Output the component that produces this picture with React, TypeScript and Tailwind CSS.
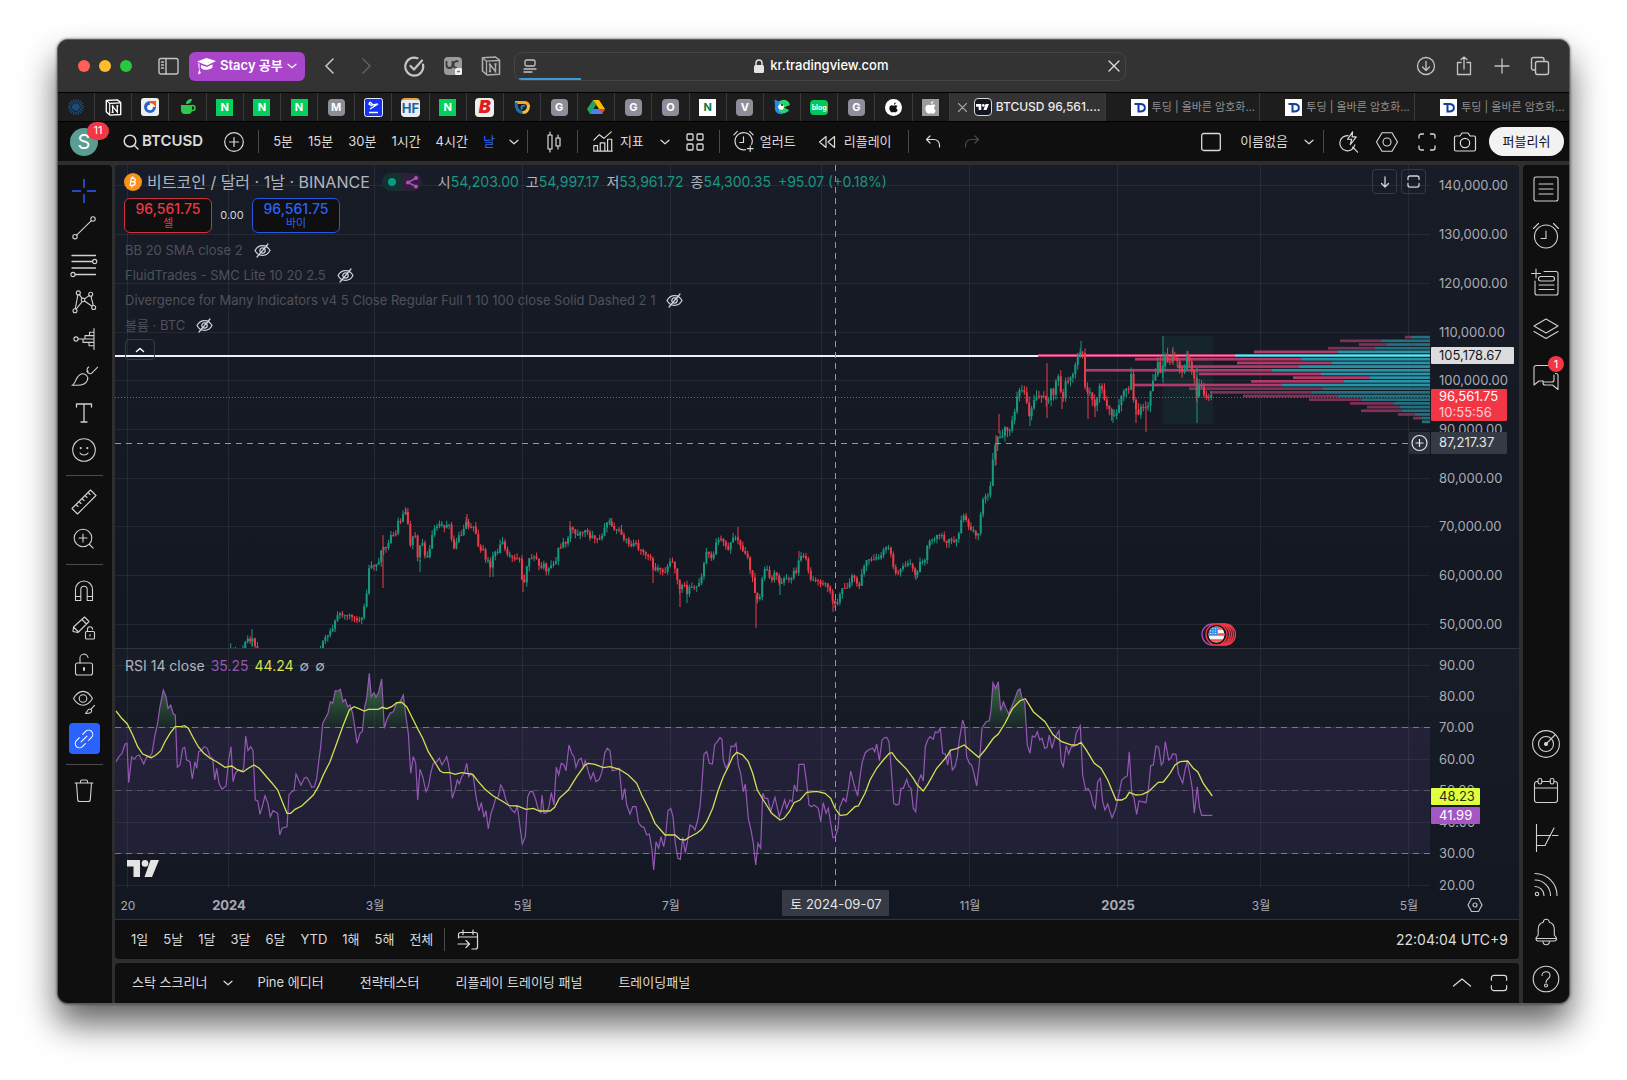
import type { ReactNode } from "react";
import clsx from "clsx";

/* ---------- chart data ---------- */

// Each segment holds x,y pairs as offsets from its own origin, divided by scale.
type Segment = { x: number; y: number; sx: number; pts: string };
type Point = [number, number];

const PLOT_RIGHT = 1315;
const DAY = 2.427;
const JAN_FIRST = 113.3;

const PRICE: Segment[] = [
  {
    x: -65, y: 395, sx: 3,
    pts: "520,310 535,280 543,262 550,270 560,285 575,275 586,245 594,235 601,245 608,235 616,262 624,300 700,320 790,300 812,265 820,240 828,228 835,225 843,208 850,205 857,175 864,163 871,160 879,168 886,165 893,168 900,164 907,172 915,175 922,182 930,178 938,170 944,130 951,95 957,25 963,10 968,30 975,10 982,15 989,0",
  },
  {
    x: 265, y: 315, sx: 3,
    pts: "0,245 8,170 14,235 18,205 25,190 32,165 40,165 48,160 55,120 62,125 70,100 78,95 85,140 92,205 100,160 108,170 115,260 122,172 128,190 136,235 145,230 152,190 160,145 168,145 176,130 185,135 195,145 205,125 212,150 218,210 226,200 234,165 242,170 250,150 260,120 268,150 276,135 285,145 292,190 300,215 308,200 315,240 322,235 330,268 338,230 346,215 355,220 362,185 370,185 378,220 386,225 394,230 404,238 412,235 418,230 424,290 430,315 436,300 442,245 450,230 458,235 466,225 474,250 482,270 490,245 498,275 506,265 514,255 520,250 526,262 532,200 540,210 548,185 556,190 562,195 568,140 576,145 584,155 590,175 598,155 606,160 614,150 622,155 630,175 638,165 646,178 654,175 662,175 670,160 676,130 684,125 692,125 698,148 706,148 714,148 722,150 728,185 736,170 744,190 752,200 760,190 768,188 776,210 784,210 792,218 800,228 808,230 816,240 822,282 830,262 838,265 846,275 854,280 862,260 870,245 878,245 886,270 892,300 898,330 906,315 914,315 920,345 928,320 936,322 944,322 952,318 960,305 966,285 972,250 978,215 986,220 994,235 1000,230 1006,190 1014,180 1022,175 1030,185 1038,200 1046,210 1054,180 1062,170 1070,175 1078,188 1086,210 1094,220 1102,225 1108,265 1116,285 1122,310 1128,370 1136,345 1144,360 1148,265 1156,268 1164,270 1170,300 1178,300 1186,265 1194,305 1202,315 1210,295 1218,295 1226,300 1234,295 1242,270 1250,280 1258,228 1266,228 1274,228 1282,245 1288,298 1296,300 1304,298 1312,302 1317,305",
  },
  {
    x: 705, y: 315, sx: 3,
    pts: "0,305 4,325 12,300 20,320 28,325 34,345 40,372 48,372 56,362 62,330 70,322 78,325 86,320 94,285 102,290 110,310 118,318 124,285 132,260 140,240 148,238 156,238 164,238 172,228 180,240 186,215 194,205 202,200 210,208 216,240 222,272 230,282 238,275 246,258 254,258 262,250 270,252 278,265 284,285 292,280 298,245 306,248 314,245 318,210 326,185 334,180 342,180 350,165 358,168 366,165 374,185 382,190 390,170 398,190 406,183 414,170 420,145 426,105 434,108 442,130 448,145 456,152 464,155 470,175 478,150 484,80 490,55 498,48 508,45",
  },
  {
    x: 805, y: 155, sx: 2.904,
    pts: "208,465 215,370 222,380 228,330 236,370 244,320 250,325 258,340 264,320 270,290 278,265 284,210 292,210 298,212 306,220 314,275 320,300 326,250 334,235 342,225 350,230 358,225 366,240 374,240 380,205 388,225 394,185 402,168 410,225 416,235 424,175 432,185 440,165 448,160 454,110 462,100 468,95 474,100 480,215 488,215 496,220 504,255 512,260 518,200 526,195 532,225 540,255 548,262 556,285 562,290 570,280 576,265 582,235 590,215 598,205 606,210 612,145 618,230 626,265 634,285 640,260 648,262 656,262 662,260 668,225 674,180 682,185 688,110 696,155 702,165 708,110 714,100 722,145 730,105 738,110 746,120 752,140 760,158 768,150 776,105 784,130 790,155 798,180 804,235 810,195 818,200 826,230 834,232 842,232 849,220",
  },
];

// Long wicks: x, top, bottom
const WICKS: [number, number, number][] = [
  [137, 464, 482], [268, 370, 423], [291, 344, 350], [305, 395, 407], [352, 349, 360],
  [375, 395, 412], [378, 390, 412], [408, 410, 427], [455, 356, 365], [495, 353, 360],
  [538, 400, 418], [565, 425, 442], [572, 425, 438], [623, 362, 372], [641, 430, 463],
  [665, 412, 430], [684, 386, 393], [718, 435, 447], [801, 405, 415], [884, 249, 268],
  [881, 270, 300], [915, 247, 261], [932, 198, 253], [947, 232, 244], [966, 176, 190],
  [973, 225, 254], [980, 238, 252], [998, 245, 258], [1021, 245, 258], [1031, 242, 267],
  [1048, 171, 218], [1058, 182, 200], [1073, 186, 200], [1082, 203, 258],
];

const RSI: Segment[] = [
  {
    x: -65, y: 395, sx: 3,
    pts: "198,605 207,590 216,580 225,553 231,550 236,668 245,590 253,598 260,588 268,585 275,600 281,612 290,590 298,592 306,580 314,530 322,495 330,440 340,390 348,410 354,445 362,435 370,462 376,465 382,622 390,615 398,565 404,562 410,600 420,605 427,657 435,605 440,625 446,575 455,570 463,560 472,565 480,590 488,595 494,660 500,625 507,670 516,688 528,678 536,600 543,560 549,665 556,640 565,630 574,635 581,625 587,528 594,572 602,560 609,572 616,720 623,722 630,763 638,735 645,707 654,730 661,770 669,752 683,760 689,825 696,805 711,800 717,705 725,695 732,692 738,642 746,660 753,675 763,655 770,652 778,665 785,682 793,680 800,655 806,605 812,560 818,490 826,475 834,460 841,425 848,430 856,392 864,393 871,388 879,425 886,418 893,440 900,435 908,460 914,500 921,550 930,520 937,515 944,440 950,415 958,340 964,410 972,398 978,412 986,395 995,357 1003,505 1010,480 1020,460 1030,455 1040,430 1050,425 1060,405 1068,470 1075,520 1082,640 1090,590 1097,610 1103,720 1110,628 1118,650 1128,695 1135,680 1142,640 1150,610 1160,605 1168,595 1176,615 1185,600 1190,590",
  },
  {
    x: 265, y: 315, sx: 3,
    pts: "205,850 210,880 217,955 225,930 232,900 238,912 245,890 253,880 260,850 266,890 273,880 280,890 288,950 297,993 304,968 312,1012 318,992 325,1047 333,1000 340,980 347,955 355,950 362,915 370,930 378,960 386,975 394,988 404,998 412,978 420,1040 427,1092 436,1070 443,950 450,935 458,935 466,955 474,985 482,998 486,945 492,1000 500,998 507,980 514,938 522,975 529,862 536,885 544,850 552,855 558,872 567,795 575,820 582,830 588,862 596,840 604,835 610,860 616,842 624,872 632,898 640,878 648,905 658,898 666,875 674,820 682,805 690,812 697,872 708,870 718,865 727,960 734,925 740,975 750,1002 758,980 768,980 776,1030 785,1040 792,1042 800,1065 808,1062 816,1110 821,1170 828,1085 836,1105 843,1070 851,1100 857,1065 864,992 872,985 879,1010 886,1090 894,1135 901,1138 908,1072 916,1118 923,1080 930,1035 938,1040 945,1050 953,1020 960,980 965,920 972,822 980,815 988,850 997,852 1004,795 1012,785 1020,773 1026,778 1030,840 1038,865 1046,850 1053,798 1062,800 1068,790 1075,855 1082,880 1090,935 1096,912 1105,1015 1113,1050 1120,1090 1127,1155 1134,1090 1142,1105 1148,940 1155,955 1163,955 1172,995 1185,952 1198,1010 1206,985 1214,960 1220,985 1230,960 1237,965 1243,915 1251,935 1257,853 1272,853 1280,910 1287,975 1294,980 1302,975 1315,985 1322,1025 1330,968 1338,1000 1345,985 1352,1030 1359,1073 1366,1070 1374,1045 1379,980",
  },
  {
    x: 705, y: 315, sx: 3,
    pts: "62,975 70,955 78,965 86,920 92,873 100,905 107,930 113,948 120,890 127,845 136,818 145,810 158,805 164,815 170,792 178,842 186,780 193,773 200,772 207,785 213,860 221,970 228,975 237,972 243,925 250,925 260,898 267,920 273,925 280,985 287,995 295,905 303,885 310,903 316,800 323,780 330,770 340,778 346,755 353,758 361,745 368,820 376,822 383,855 390,810 397,870 405,860 412,830 418,780 428,720 434,740 440,830 448,850 455,855 463,885 470,918 478,850 486,745 498,725 508,722 513,690 519,608 527,625 535,605 542,692 550,665 558,685 566,702 575,680 585,655 594,630 600,627 606,655 614,665 622,795 630,820 637,768 645,772 652,755 659,780 666,775 674,805 681,802 688,765 696,805 704,775 717,752 724,845 730,860 739,797 746,822 754,800 762,800 769,758 781,737 788,885 797,930 804,925 812,940 820,975 826,985 833,905 841,895 848,965 855,990 863,972 870,995 876,1013 886,990 894,955 905,900 915,892 922,888 928,815 935,940 942,955 950,1003 957,962 965,965 978,968 986,920 992,857 1000,855 1008,798 1016,802 1024,855 1030,845 1036,785 1046,840 1052,835 1058,822 1068,823 1075,880 1088,910 1095,870 1102,845 1110,885 1117,925 1123,1000 1132,920 1138,980 1145,1006 1177,1006",
  },
];

const RSI_MA: Segment[] = [
  {
    x: -65, y: 395, sx: 3,
    pts: "198,453 215,475 232,492 248,525 263,560 278,582 304,593 318,585 332,572 345,545 360,520 376,500 392,500 404,497 415,505 428,530 445,560 460,578 480,595 500,605 525,622 545,618 560,628 580,635 595,625 612,615 628,625 645,645 665,668 683,690 697,725 711,760 722,760 735,748 755,738 772,722 790,705 805,680 820,645 840,605 860,550 880,495 898,450 912,440 925,445 943,453 955,448 985,448 997,442 1010,446 1025,440 1040,428 1055,427 1070,440 1085,470 1105,510 1118,535 1135,575 1158,612 1170,632 1180,638",
  },
  {
    x: 265, y: 315, sx: 3,
    pts: "210,878 225,883 245,878 278,883 295,905 315,928 340,948 370,965 388,977 412,978 438,988 460,985 478,993 510,993 524,982 538,955 565,930 590,890 615,855 625,850 645,853 670,863 690,860 718,868 745,885 770,910 785,945 808,990 825,1030 855,1065 885,1065 900,1078 915,1080 930,1070 950,1060 965,1048 980,1025 998,985 1015,930 1030,890 1045,860 1058,830 1070,817 1088,825 1105,845 1118,880 1132,930 1150,960 1175,1000 1200,1020 1212,1015 1228,995 1242,968 1260,960 1280,937 1310,934 1335,940 1352,955 1365,985 1379,1004",
  },
  {
    x: 705, y: 315, sx: 3,
    pts: "62,1006 80,1004 105,980 115,978 135,940 150,900 170,865 190,840 208,820 216,818 230,838 260,868 280,895 292,915 310,933 325,910 350,865 380,830 392,810 410,806 433,795 450,810 476,832 495,810 520,775 535,762 555,730 578,685 600,662 616,656 640,695 675,725 700,765 725,785 755,795 770,795 783,787 800,812 823,850 843,865 863,900 888,960 905,960 918,953 928,937 948,945 965,944 985,935 1015,907 1030,906 1050,880 1065,855 1080,845 1103,843 1120,865 1133,875 1150,910 1177,948",
  },
];

// Volume profile rows: where the sell part starts and where the buy part starts
const PROFILE: [number, number][] = [
  [1290, 1296], [1225, 1266], [1244, 1272], [1213, 1260], [1139, 1223], [923, 1120],
  [1020, 1187], [1122, 1217], [1062, 1184], [970, 1157], [1084, 1206], [1178, 1255],
  [1136, 1229], [1018, 1167], [1074, 1208], [1095, 1197], [1128, 1223], [1194, 1247],
  [1235, 1279], [1252, 1285], [1246, 1287], [1283, 1300], [1298, 1307], [1307, 1307],
];

const PRICE_GRID: [number, string][] = [
  [20, "140,000.00"], [69, "130,000.00"], [118, "120,000.00"], [167, "110,000.00"],
  [215, "100,000.00"], [264, "90,000.00"], [313, "80,000.00"], [361, "70,000.00"],
  [410, "60,000.00"], [459, "50,000.00"],
];
const RSI_GRID: [number, string][] = [
  [500, "90.00"], [531, "80.00"], [562, "70.00"], [594, "60.00"], [625, "50.00"],
  [657, "40.00"], [688, "30.00"], [720, "20.00"],
];
const TIME_GRID: [number, string, boolean?][] = [
  [12, "20"], [113, "2024", true], [259, "3월"], [407, "5월"], [555, "7월"], [706, ""],
  [854, "11월"], [1002, "2025", true], [1145, "3월"], [1293, "5월"],
];

const decode = (segments: Segment[]): Point[] =>
  segments.flatMap((s) =>
    s.pts.split(" ").map((p): Point => {
      const [x, y] = p.split(",").map(Number);
      return [s.x + x / s.sx, s.y + y / 3];
    }),
  );

const toPath = (points: Point[]) =>
  "M" + points.map(([x, y]) => `${x.toFixed(1)} ${y.toFixed(1)}`).join("L");

function valueAt(points: Point[], x: number) {
  const i = points.findIndex((p) => p[0] >= x);
  if (i <= 0) return points[i === 0 ? 0 : points.length - 1][1];
  const [x0, y0] = points[i - 1];
  const [x1, y1] = points[i];
  return y0 + ((y1 - y0) * (x - x0)) / (x1 - x0 || 1);
}

function buildCandles() {
  const points = decode(PRICE);
  const candles = [];
  for (let i = -2; i < 412; i++) {
    const x = JAN_FIRST + i * DAY;
    if (x > 1098) break;
    const open = valueAt(points, x - DAY);
    const close = valueAt(points, x);
    const wobble = Math.abs(Math.sin(i * 12.9898) * 43758.5453) % 1;
    const reach = x > 870 ? 7 : 5;
    const body = Math.max(Math.abs(open - close), 1);
    const flip = body < 1.6 && wobble > 0.5;
    candles.push({
      x,
      up: flip ? close > open : close <= open,
      top: Math.min(open, close),
      body,
      high: Math.min(open, close) - wobble * reach,
      low: Math.max(open, close) + (1 - wobble) * reach,
    });
  }
  return candles;
}

const CANDLES = buildCandles();
const RSI_PATH = toPath(decode(RSI));
const MA_PATH = toPath(decode(RSI_MA));

/* ---------- icons ---------- */

function Icon({ size = 28, box = 28, w = 1.1, className, children }: {
  size?: number; box?: number; w?: number; className?: string; children: ReactNode;
}) {
  return (
    <svg
      width={size} height={size} viewBox={`0 0 ${box} ${box}`} fill="none" stroke="currentColor"
      strokeWidth={w} strokeLinecap="round" strokeLinejoin="round" aria-hidden="true"
      className={clsx("shrink-0", className)}
    >
      {children}
    </svg>
  );
}

const Chevron = () => (
  <Icon size={10} box={10} w={1.2}><path d="M1 3.2l4 3.6 4-3.6" /></Icon>
);

const HexNut = ({ size }: { size: number }) => (
  <Icon size={size} box={24}>
    <path d="M7 2.7h10L22.5 12 17 21.3H7L1.5 12z" /><circle cx="12" cy="12" r="4" />
  </Icon>
);

const Corners = ({ size, w = 1.3 }: { size: number; w?: number }) => (
  <Icon size={size} box={20} w={w}>
    <path d="M1.5 7V4.500a3 3 0 0 1 3-3h11a3 3 0 0 1 3 3V7M18.500 13v2.500a3 3 0 0 1-3 3h-11a3 3 0 0 1-3-3V13" />
  </Icon>
);

const TvMark = ({ width }: { width: number }) => (
  <svg width={width} viewBox="0 0 32 17" fill="currentColor" aria-hidden="true">
    <path d="M0 0h13v17H6.5V6.5H0z" /><circle cx="18" cy="3.4" r="3.3" /><path d="M23.5 0H32l-7 17h-7.5z" />
  </svg>
);

const NotionMark = ({ size, className }: { size: number; className?: string }) => (
  <svg width={size} height={size} viewBox="0 0 20 20" className={className} aria-hidden="true">
    <path d="M1.5 1.8L14.5 1l4 3.2v14L6 19l-4.500-4z" fill="none" stroke="currentColor" strokeWidth="1.6" strokeLinejoin="round" />
    <path d="M5.5 5.2L18 4.5M5.5 5.2V18.5M1.8 2l3.7 3.2" fill="none" stroke="currentColor" strokeWidth="1.3" />
    <path d="M9 15.5V8.500l5.500 7V8M7.800 8.400H10M7.800 15.600h2.400M13.300 8h2.400" fill="none" stroke="currentColor" strokeWidth="1.500" />
  </svg>
);

const TooDingMark = () => (
  <svg width="17" height="17" viewBox="0 0 17 17" fill="none" stroke="#0e3f9e" strokeWidth="2" className="mr-1 shrink-0 bg-white" aria-hidden="true">
    <path d="M3.500 5h5.500c6.500 0 6.500 7.500 0 7.500H7.500V5" />
  </svg>
);

const DRAW_TOOLS: { name: string; icon: ReactNode; active?: boolean; linked?: boolean }[][] = [
  [
    { name: "십자선", active: true, icon: <path d="M14 2.5v8M14 17.5v8M2.5 14h8M17.5 14h8" strokeWidth="1.4" /> },
    { name: "추세선", icon: <><circle cx="5" cy="22.7" r="2.2" /><circle cx="23" cy="5" r="2.2" /><path d="M6.6 21.1L21.4 6.6" /></> },
    { name: "피보나치", icon: <><path d="M2 4.5h23.5M2 10.5h20.5M2 17h23.5M5.2 23.5h20.3" strokeWidth="1.3" /><circle cx="24.7" cy="10.5" r="2.1" /><circle cx="3" cy="23.5" r="2.1" /></> },
    { name: "패턴", icon: <><circle cx="8.3" cy="4.9" r="2" /><circle cx="20.7" cy="6.3" r="2" /><circle cx="5" cy="22.7" r="2" /><circle cx="23.7" cy="19.5" r="2" /><circle cx="13" cy="11.9" r="1.8" /><path d="M7.9 6.9L5.3 20.7M9.4 6.6l2.6 3.8M14.6 10.9l4.500-3.300M21 8.300l2.300 9.200M14.500 13l7.600 5.300M12.200 13.600L6.200 21" /></> },
    { name: "예측", icon: <><circle cx="6" cy="14" r="2.1" /><path d="M24 3.5v21M8.2 14h15.8M24 7.2h-4.5v3.4M24 10.6h-9v3.4M24 17.4H13V14M24 20.8h-5v-3.4" /></> },
    { name: "브러시", icon: <><path d="M2 23.3c4-1 3.5-10.3 10-11.5 4-.5 6.5 3 5.500 6-1.300 3.800-6 5.500-10.500 5.500z" /><path d="M18 9.500c-1.500-1.500-1-3.500.7-4.500M17 9.300c1 2.500 3.500 3 5 1.600l5.700-5.800" /></> },
    { name: "텍스트", icon: <path d="M6.5 8V5h15v3M14 5v18M11 23h6" strokeWidth="1.3" /> },
    { name: "아이콘", icon: <><circle cx="14" cy="14" r="11.3" /><path d="M10 17c1.500 2.600 6.500 2.600 8 0" /><path d="M10.7 12v.1M17.3 12v.1" strokeWidth="2.2" /></> },
  ],
  [
    { name: "측정", icon: <path d="M2 20.5L20.5 2l5.500 5.500L7.500 26zM6 16.500l2 2M9 13.500l2 2M12 10.500l2 2M15 7.500l2 2M18 4.500l2 2" /> },
    { name: "확대", icon: <><circle cx="13" cy="13" r="8.8" /><path d="M19.5 19.5l3.7 3.7M13 9v8M9 13h8" /></> },
  ],
  [
    { name: "자석", icon: <path d="M5.5 23.5v-11a8.5 8.5 0 0 1 17 0v11h-5.300v-11a3.200 3.200 0 0 0-6.400 0v11zM5.500 19.500h5.300M17.200 19.500h5.300" /> },
    { name: "그리기 유지", icon: <><path d="M3 17.5l.5-4.500L14.500 3l4.500 4.500-11 11zM12 5.500l4.500 4.500M3.500 13l4.500 4.500" /><rect x="15.5" y="17.5" width="9" height="7.5" rx="1" /><path d="M17.5 17.5v-2.200a2.500 2.500 0 0 1 5 0M20 20.500v1.500" /></> },
    { name: "잠금", icon: <><rect x="5.5" y="12" width="17" height="12" rx="2" /><path d="M10 12V8a4 4 0 0 1 8-1.500" /><path d="M14 17v2" strokeWidth="2" /></> },
    { name: "숨기기", icon: <><path d="M3.5 10.5c5.500-9.500 13.500-9.500 19 0-5.500 9-13.500 9-19 0z" /><circle cx="13" cy="10.5" r="3.8" /><path d="M15.5 25.5c1.500-.5 1.500-4.500 4.300-4.500 2.200.2 2.200 2.500 1 3.500-1.300 1-3.300 1-5.300 1zM21.300 20.800l3.200-3.500" /></> },
    { name: "시간 동기화", linked: true, icon: <g transform="rotate(-45 14 14)"><path d="M11.5 9.5H7a4.500 4.500 0 0 0 0 9h4.500M16.500 9.500H21a4.500 4.500 0 0 1 0 9h-4.500M9.500 14h9" /></g> },
  ],
  [
    { name: "삭제", icon: <path d="M5 6h18M10.500 6V4.500a1.500 1.500 0 0 1 1.500-1.500h4A1.500 1.500 0 0 1 17.500 4.500V6M6.500 6l1.200 16.500a2 2 0 0 0 2 2h8.600a2 2 0 0 0 2-2L21.500 6" /> },
  ],
];

const SIDE_TOP: { name: string; icon: ReactNode }[] = [
  { name: "왓치리스트", icon: <><rect x="2" y="2" width="24" height="24" rx="2" /><path d="M7 9h14M7 14h14M7 19h14" /></> },
  { name: "얼러트", icon: <><circle cx="14" cy="14.5" r="11.5" /><path d="M14 9v7.500H9M1.500 6.500l5-5M26.500 6.500l-5-5" /></> },
  { name: "핫리스트", icon: <><path d="M4 0v9M-.5 4.500h9M12 2.500h12a2 2 0 0 1 2 2V24a2 2 0 0 1-2 2H5a2 2 0 0 1-2-2V12" /><rect x="6.500" y="7.500" width="16" height="4.500" rx="2.200" /><path d="M7 16h15M7 20.500h15" /></> },
  { name: "오브젝트 트리", icon: <path d="M14 3l12 7-12 7-12-7zM2 15.500l12 7 12-7" /> },
  { name: "채팅", icon: <><path d="M21 4.500a2 2 0 0 0-2-2H4a2 2 0 0 0-2 2V22l5-4h4" /><path d="M23.500 10.500a2 2 0 0 1 2.500 2V26.500l-5.500-4.500H13a2 2 0 0 1-2-2v-2M22 12v5a2 2 0 0 1-2 2h-8" /></> },
];

const SIDE_BOTTOM: { name: string; icon: ReactNode }[] = [
  { name: "스트림", icon: <><circle cx="14" cy="14" r="13.4" /><circle cx="14" cy="14" r="7.5" /><path d="M14 14l9-9" /><circle cx="14" cy="14" r="1.5" fill="currentColor" /></> },
  { name: "캘린더", icon: <><path d="M6 4.500H5a2.500 2.500 0 0 0-2.500 2.500v16A2.500 2.500 0 0 0 5 25.500h18a2.500 2.500 0 0 0 2.500-2.500V7A2.500 2.500 0 0 0 23 4.500h-1M10 4.500h8M2.500 11h23" /><rect x="6" y="1.5" width="3.8" height="5.5" rx="1.7" /><rect x="18.2" y="1.5" width="3.8" height="5.5" rx="1.7" /></> },
  { name: "옵션", icon: <path d="M4.500-1v30M4.500 11.500h14M20.500 11.500h5.500M4.500 21.500h8.500L22 4" /> },
  { name: "뉴스피드", icon: <><circle cx="5" cy="23" r="1.7" /><path d="M3 15.500a9 9 0 0 1 9 9M3 9a15.500 15.500 0 0 1 15.500 15.500M3 2.500A22 22 0 0 1 25 24.500" /></> },
  { name: "알림", icon: <path d="M4 20.500h20.500v-.5l-2.200-3V11c0-3.500-2-6-5-6.800a3 3 0 0 0-6 0C8.200 5 6.200 7.500 6.200 11v6L4 20zM4 20.500c0 1.500.5 2.500 2 2.500h16.500c1.500 0 2-1 2-2.500M11 23.500a3.200 3.200 0 0 0 6.400 0" /> },
  { name: "도움말", icon: <><circle cx="14" cy="14" r="12.8" /><path d="M10 10.500c0-5 8-5 8 0 0 3.500-4 3-4 7" /><circle cx="14" cy="20.5" r="1.5" /></> },
];

/* ---------- browser chrome ---------- */

function TitleBar() {
  return (
    <header className="flex h-[52px] items-center bg-[#333333] text-[#c4c4c4]">
      <div className="ml-5 flex gap-[9px]">
        <button aria-label="닫기" className="size-3 rounded-full bg-[#fe5f57]" />
        <button aria-label="최소화" className="size-3 rounded-full bg-[#febb2e]" />
        <button aria-label="확대" className="size-3 rounded-full bg-[#28c73f]" />
      </div>
      <button aria-label="사이드바" className="ml-[26px]">
        <Icon size={21} box={21} w={1.4}>
          <rect x="1" y="2.500" width="19" height="15.500" rx="2" /><path d="M8 2.500V18M3.500 6h2M3.500 9h2M3.500 12h2" />
        </Icon>
      </button>
      <button className="ml-[10px] flex h-[29px] items-center rounded-md bg-[#a845c9] px-2 font-semibold whitespace-nowrap text-white">
        <svg width="19" height="18" viewBox="0 0 19 18" fill="currentColor" aria-hidden="true">
          <path d="M0 4.500L9.500 1 19 4l-9 4.500zM4 8l6 2 5.500-2.700v3.200c-2 2-7.500 3-9.800 1.800L4 11zM1 6l1.500.7V13l1.500 3-3 1.500L2 13z" />
        </svg>
        <span className="mx-1 text-[13px]">Stacy 공부</span>
        <Chevron />
      </button>
      <button aria-label="뒤로" className="ml-[17px]">
        <Icon size={16} box={16} w={1.6}><path d="M11 1L4 8l7 7" /></Icon>
      </button>
      <button aria-label="앞으로" className="ml-5 text-[#646464]">
        <Icon size={16} box={16} w={1.4}><path d="M5 1l7 7-7 7" /></Icon>
      </button>
      <button aria-label="할 일" className="ml-[30px]">
        <Icon size={21} box={21} w={2.2}><path d="M13.500 2.200A9 9 0 1 0 19 8.500M6.500 10l3.500 3.500L18 4.500" /></Icon>
      </button>
      <button aria-label="확장 프로그램" className="ml-[18px]">
        <svg width="20" height="20" viewBox="0 0 20 20" aria-hidden="true">
          <rect x="1" y="1" width="18" height="18" rx="4" fill="#9b9b9b" />
          <path d="M3.500 5v4a3 3 0 0 0 6 0V5M15.500 5.500c-3-1-5 .5-5 3s1.500 3.500 3.500 3.500" stroke="#3a3a3a" strokeWidth="1.800" fill="none" />
          <rect x="12" y="12" width="7" height="7" rx="1.500" fill="#f0f0f0" /><path d="M14 15.500h3" stroke="#777" strokeWidth="1.500" />
        </svg>
      </button>
      <button aria-label="Notion" className="ml-[18px]"><NotionMark size={20} className="text-[#adadad]" /></button>
      <div className="relative ml-[13px] flex h-[29px] w-[612px] min-w-0 shrink items-center overflow-hidden rounded-lg border border-[#454545] pr-[5px] pl-2">
        <Icon size={14} box={14} w={1.3}><rect x="2" y="1" width="10" height="6" rx="1.500" /><path d="M1 10h12M1 13h8" /></Icon>
        <div className="flex flex-1 items-center justify-center gap-1.5 text-[#e4e4e4]">
          <svg width="10" height="14" viewBox="0 0 10 14" aria-hidden="true">
            <rect y="6" width="10" height="8" rx="1.500" fill="currentColor" />
            <path d="M2 6.500V4a3 3 0 0 1 6 0v2.500" fill="none" stroke="currentColor" strokeWidth="1.400" />
          </svg>
          <input aria-label="주소" readOnly value="kr.tradingview.com" className="w-[120px] bg-transparent text-[13px] font-medium text-white outline-none" />
        </div>
        <button aria-label="중단" className="text-[#e0e0e0]"><Icon size={12} box={12} w={1.3}><path d="M1 1l10 10M11 1L1 11" /></Icon></button>
        <span className="absolute bottom-0 left-1 h-0.5 w-[62px] bg-[#3d9bd6]" />
      </div>
      <div className="mr-[19px] ml-auto flex items-center gap-[18px]">
        <button aria-label="다운로드"><Icon size={20} box={20} w={1.3}><circle cx="10" cy="10" r="8.500" /><path d="M10 5.500v9M6.500 11l3.500 3.500 3.500-3.500" /></Icon></button>
        <button aria-label="공유"><Icon size={20} box={20} w={1.3}><path d="M7 6.500H3.500v12h13v-12H13M10 13V1M7 3.500L10 1l3 2.500" /></Icon></button>
        <button aria-label="새로운 탭"><Icon size={20} box={20} w={1.3}><path d="M10 3v14M3 10h14" /></Icon></button>
        <button aria-label="탭 개요"><Icon size={20} box={20} w={1.4}><rect x="5.500" y="5.500" width="13" height="13" rx="2" /><path d="M5.500 14H3.500a2 2 0 0 1-2-2V3.500a2 2 0 0 1 2-2H12a2 2 0 0 1 2 2v2" /></Icon></button>
      </div>
    </header>
  );
}

const letter = (text: string, tone: string) => (
  <span className={clsx("flex size-[17px] items-center justify-center text-[11px] leading-none font-bold", tone)}>{text}</span>
);
const GRAY = "rounded bg-[#8e8e9a] text-white";
const NAVER = "bg-[#03cf5d] text-white font-black";

const APPLE = "M12 2.500c.1 1.400-1 2.700-2.500 2.800C9.400 3.900 10.600 2.600 12 2.500zM14.200 7.200c-2 1.200-1.700 4 .4 4.900-.5 1.500-1.700 3.400-2.900 3.400-.9 0-1.300-.5-2.400-.5s-1.600.5-2.400.5c-1.500 0-3.400-3-3.400-5.500C3.500 7.500 5 6 6.700 6c1 0 1.900.6 2.500.6.6 0 1.600-.7 2.900-.7.8 0 1.600.5 2.100 1.300z";

const PINNED: { name: string; icon: ReactNode }[] = [
  {
    name: "만다라",
    icon: (
      <svg width="18" height="18" viewBox="0 0 18 18" stroke="#1d4f80" strokeWidth="1.2">
        {[0, 20, 40, 60, 80, 100, 120, 140, 160].map((a) => <path key={a} d="M9 1V17" strokeDasharray="3.500 .8" transform={`rotate(${a} 9 9)`} />)}
      </svg>
    ),
  },
  { name: "Notion", icon: <NotionMark size={17} className="text-white" /> },
  { name: "차트", icon: <svg width="18" height="18" viewBox="0 0 18 18"><rect width="18" height="18" rx="3" fill="#eee" /><path d="M9 3a6 6 0 1 0 6 6H9z" fill="#2765c9" /><path d="M8 3h7v8c-1-4-3-6-7-6z" fill="#ee5a24" /><circle cx="9" cy="9.500" r="2.800" fill="#fff" /></svg> },
  { name: "카페", icon: <svg width="18" height="18" viewBox="0 0 18 18" fill="#2dc84d"><path d="M2 7h11v5a4 4 0 0 1-4 4H6a4 4 0 0 1-4-4zM7 6c0-3 2-5 6-5-.5 3-2 5-6 5z" /><circle cx="13.500" cy="10" r="2.500" fill="none" stroke="#2dc84d" strokeWidth="1.500" /></svg> },
  { name: "Naver", icon: letter("N", NAVER) },
  { name: "Naver", icon: letter("N", NAVER) },
  { name: "Naver", icon: letter("N", NAVER) },
  { name: "M", icon: letter("M", GRAY) },
  { name: "Deepnoid", icon: <svg width="19" height="19" viewBox="0 0 19 19"><rect x=".5" y=".5" width="18" height="18" rx="2" fill="#1433f5" stroke="#e8ebff" /><path d="M6 4l3 3 5-1-8 5M6 4l-1 2 3 2M5 14.500h9" stroke="#fff" strokeWidth="1.400" fill="none" /></svg> },
  { name: "HF", icon: <span className="flex size-[19px] items-center justify-center rounded-sm border-t-2 border-[#e8a33d] bg-[#e9edf2] text-[13px] leading-none font-bold text-[#1765a8]">HF</span> },
  { name: "Naver", icon: letter("N", NAVER) },
  { name: "B", icon: <span className="flex size-[19px] items-center justify-center rounded-sm bg-[#ededed] text-lg leading-none font-black text-[#e01b22] italic">B</span> },
  { name: "스튜디오", icon: <svg width="18" height="18" viewBox="0 0 18 18" fill="none" strokeWidth="3"><path d="M2 4.500h9c3 0 4.500 1.500 4.500 4" stroke="#f5a623" /><path d="M3 4.500c0 6 1.500 9.500 6.500 10" stroke="#1f6fa8" /><path d="M15.500 7c0 5-2.500 7.500-6 7.500" stroke="#f5c03a" /><path d="M12 8c-3-1-4.500 1-3 3.500" stroke="#2f80c0" strokeWidth="2" /></svg> },
  { name: "G", icon: letter("G", GRAY) },
  { name: "Drive", icon: <svg width="18" height="16" viewBox="0 0 18 16"><path d="M6 1l3 5-6 9-3-5z" fill="#23a566" /><path d="M6 1h6l6 9h-6z" fill="#fbbc05" /><path d="M6 10h12l-3 5H3z" fill="#4285f4" /><path d="M12 10h6l-3 5z" fill="#ea4335" /></svg> },
  { name: "G", icon: letter("G", GRAY) },
  { name: "O", icon: letter("O", GRAY) },
  { name: "N", icon: letter("N", "bg-white text-[#0b7a4b] font-black") },
  { name: "V", icon: letter("V", GRAY) },
  { name: "Whale", icon: <svg width="18" height="18" viewBox="0 0 18 18"><path d="M1.500 1.500l3.500 1.500h5v13C4 17 1 13 2 8z" fill="#1a8ee8" /><path d="M6 4c4-4 10-2 11 3l-6 2.500 5 2.500c-2 4-8 4-10 1z" fill="#2fd06e" /><circle cx="8" cy="9" r="2.800" fill="#fff" /><circle cx="9" cy="7" r="1" fill="#222" /></svg> },
  { name: "blog", icon: <span className="flex h-[15px] w-[18px] items-center justify-center rounded-sm bg-[#03c75a] text-[7px] leading-none font-bold text-white">blog</span> },
  { name: "G", icon: letter("G", GRAY) },
  { name: "Apple", icon: <svg width="17" height="17" viewBox="0 0 18 18"><circle cx="9" cy="9" r="9" fill="#fff" /><path d={APPLE} fill="#111" transform="translate(1.800 1.800) scale(.8)" /></svg> },
  { name: "Apple", icon: <svg width="17" height="17" viewBox="0 0 18 18"><rect width="18" height="18" fill="#9c9c9c" /><path d={APPLE} fill="#fff" /></svg> },
];

function TabBar() {
  return (
    <div role="tablist" aria-label="탭" className="grid h-[30px] grid-cols-[repeat(24,minmax(0,6fr))_repeat(4,minmax(0,25fr))] border-y border-black bg-[#1d1d1d]">
      {PINNED.map((tab, i) => (
        <button key={i} role="tab" aria-label={tab.name} className="flex items-center justify-center overflow-hidden border-r border-[#3a3a3a]">
          {tab.icon}
        </button>
      ))}
      <button role="tab" aria-selected="true" className="flex items-center overflow-hidden bg-[#333333] px-2 text-xs font-medium whitespace-nowrap text-[#ececec]">
        <Icon size={9} box={9} w={1.1} className="text-[#a0a0a0]"><path d="M.5.5l8 8M8.500.5l-8 8" /></Icon>
        <span className="mr-1 ml-[7px] flex size-[18px] shrink-0 items-center justify-center rounded-sm border border-[#d6d6d6] bg-[#131722] text-white">
          <TvMark width={13} />
        </span>
        BTCUSD 96,561....
      </button>
      {[0, 1, 2].map((i) => (
        <button key={i} role="tab" className="flex items-center overflow-hidden border-l border-[#3a3a3a] pl-[25px] text-[11px] whitespace-nowrap text-[#8f8f8f]">
          <TooDingMark />
          <span className="truncate">투딩 | 올바른 암호화...</span>
        </button>
      ))}
    </div>
  );
}

/* ---------- TradingView ---------- */

const Sep = ({ className }: { className?: string }) => (
  <span className={clsx("h-[23px] w-px shrink-0 bg-[#4a4a4a]", className)} />
);

function Toolbar() {
  return (
    <nav aria-label="차트 툴바" className="flex h-[39px] items-center bg-[#0f0f0f] text-[13px] whitespace-nowrap text-[#dbdbdb]">
      <button aria-label="사용자 메뉴" className="relative ml-3 flex size-7 shrink-0 items-center justify-center rounded-full bg-[#5b9c93] text-xl text-white">
        S
        <span className="absolute -top-1.5 left-[17px] flex h-[18px] w-[22px] items-center justify-center rounded-full bg-[#f23645] text-[11px]">11</span>
      </button>
      <button className="ml-[25px] flex items-center gap-[3px] text-[15px] font-semibold">
        <Icon size={16} box={16} w={1.5}><circle cx="7" cy="7" r="5.800" /><path d="M11.500 11.500l3.500 3.500" /></Icon>
        BTCUSD
      </button>
      <button aria-label="심볼 비교" className="ml-[21px]"><Icon size={20} box={20} w={1.2}><circle cx="10" cy="10" r="9.300" /><path d="M10 5.500v9M5.500 10h9" /></Icon></button>
      <Sep className="ml-3.5" />
      <div className="ml-3.5 flex gap-[15px]">
        {["5분", "15분", "30분", "1시간", "4시간"].map((t) => <button key={t}>{t}</button>)}
        <button aria-pressed="true" className="text-[#2962ff]">날</button>
      </div>
      <button aria-label="더 많은 인터벌" className="ml-3.5"><Chevron /></button>
      <Sep className="ml-2" />
      <button aria-label="캔들" className="ml-[15px]">
        <Icon size={22} box={22} w={1.2}><rect x="5" y="4" width="4" height="14" /><rect x="13" y="7" width="4" height="8" /><path d="M7 1v3M7 18v3M15 4v3M15 15v3" /></Icon>
      </button>
      <Sep className="ml-3" />
      <button className="ml-3.5 flex items-center gap-1.5">
        <Icon size={22} box={24} w={1.3}><path d="M2 10l6-6 5 4 8-7M2 22v-6h4v6zM9 22v-9h5v9zM17 22V9h4.500v13zM2 22h20" /></Icon>
        지표
      </button>
      <button aria-label="즐겨찾기" className="ml-4"><Chevron /></button>
      <button aria-label="레이아웃" className="ml-[15px]">
        <Icon size={20} box={20} w={1.3}><rect x="2" y="2" width="6" height="6" rx="1" /><rect x="12" y="2" width="6" height="6" rx="1" /><rect x="2" y="12" width="6" height="6" rx="1" /><rect x="12" y="12" width="6" height="6" rx="1" /></Icon>
      </button>
      <Sep className="ml-3.5" />
      <button className="ml-3 flex items-center gap-[5px]">
        <Icon size={23} box={24} w={1.2}><path d="M14 20.500A9 9 0 1 1 20.500 15M12 7v6H8M2 5l3.500-3.500M22 5l-3.500-3.500M19 16.500v6M16 19.500h6" /></Icon>
        얼러트
      </button>
      <button className="ml-[22px] flex items-center gap-2">
        <Icon size={18} box={18} w={1.2}><path d="M8 3.500v11L1.500 9zM16.500 3.500v11L10 9z" /></Icon>
        리플레이
      </button>
      <Sep className="ml-4" />
      <button aria-label="되돌리기" className="ml-4"><Icon size={16} box={16} w={1.2}><path d="M5 2L1.500 5.500 5 9M1.500 5.500H9a5.500 5.500 0 0 1 5.500 5.500v2" /></Icon></button>
      <button aria-label="다시 실행" className="ml-[23px] text-[#4a4a4a]"><Icon size={16} box={16} w={1.2}><path d="M11 2l3.500 3.500L11 9M14.500 5.500H7A5.500 5.500 0 0 0 1.500 11v2" /></Icon></button>

      <div className="mr-[5px] ml-auto flex items-center">
        <button aria-label="레이아웃 선택"><Icon size={20} box={20} w={1.3}><rect x=".7" y="1.500" width="18.600" height="17" rx="2" /></Icon></button>
        <button className="ml-[19px] flex items-center gap-4">이름없음 <Chevron /></button>
        <Sep className="ml-[9px]" />
        <button aria-label="빠른 검색" className="ml-[13px]"><Icon size={22} box={24} w={1.3}><path d="M12 5a8.300 8.300 0 1 0 7.500 10M17 17.500l5.500 5.500M17 1l-5.500 8H16l-1.500 6L21 6.500h-4.500z" /></Icon></button>
        <button aria-label="설정" className="ml-4"><HexNut size={24} /></button>
        <button aria-label="전체화면" className="ml-[18px]"><Icon size={20} box={20} w={1.3}><path d="M2 6V4a2 2 0 0 1 2-2h2.500M13.500 2H16a2 2 0 0 1 2 2v2M18 14v2a2 2 0 0 1-2 2h-2.500M6.500 18H4a2 2 0 0 1-2-2v-2" /></Icon></button>
        <button aria-label="스냅샷" className="ml-4"><Icon size={24} box={24} w={1.2}><path d="M3 6h4l2-3h6l2 3h4a1.500 1.500 0 0 1 1.500 1.500v12A1.500 1.500 0 0 1 21 21H3a1.500 1.500 0 0 1-1.500-1.500v-12A1.500 1.500 0 0 1 3 6z" /><circle cx="12" cy="13" r="4.700" /></Icon></button>
        <button className="ml-3 h-[29px] w-[75px] rounded-full bg-[#f2f2f2] text-[#0f0f0f]">퍼블리쉬</button>
      </div>
    </nav>
  );
}

function DrawingBar() {
  return (
    <aside aria-label="드로잉 도구" className="flex w-[54px] shrink-0 flex-col items-center rounded-tr bg-[#0f0f0f] pt-[7px] pr-0.5 text-[#d1d1d1]">
      {DRAW_TOOLS.map((group, i) => (
        <div key={i} className="flex flex-col items-center">
          {i > 0 && <span className="my-[7px] h-px w-[37px] bg-[#4a4a4a]" />}
          {group.map((tool) => (
            <button key={tool.name} aria-label={tool.name} className="flex h-[37px] w-[37px] items-center justify-center">
              <span className={clsx("flex size-[31px] items-center justify-center rounded", tool.active && "text-[#2962ff]", tool.linked && "bg-[#2962ff] text-white")}>
                <Icon size={tool.linked ? 26 : 28}>{tool.icon}</Icon>
              </span>
            </button>
          ))}
        </div>
      ))}
    </aside>
  );
}

function SideBar() {
  return (
    <aside aria-label="위젯 바" className="flex w-[46px] shrink-0 flex-col items-center justify-between rounded-tl bg-[#0f0f0f] pb-px text-[#d1d1d1]">
      <div>
        {SIDE_TOP.map((item) => (
          <button key={item.name} aria-label={item.name} className="relative flex h-[47px] items-center justify-center">
            <Icon size={28} className="overflow-visible">{item.icon}</Icon>
            {item.name === "채팅" && (
              <span className="absolute top-[3px] left-4 flex size-4 items-center justify-center rounded-full bg-[#f23645] text-[11px] leading-none text-white">1</span>
            )}
          </button>
        ))}
      </div>
      <div>
        {SIDE_BOTTOM.map((item) => (
          <button key={item.name} aria-label={item.name} className="flex h-[47px] items-center justify-center">
            <Icon size={28}>{item.icon}</Icon>
          </button>
        ))}
      </div>
    </aside>
  );
}

function Tag({ x, y, w, h, fill, color, lines }: {
  x: number; y: number; w: number; h: number; fill: string; color: string; lines: string[];
}) {
  return (
    <g>
      <rect x={x} y={y} width={w} height={h} rx="1" fill={fill} />
      {lines.map((line, i) => (
        <text key={line} x={x + 8} y={y + (h * (2 * i + 1)) / (2 * lines.length) + 4} fill={color} opacity={i ? 0.75 : 1}>{line}</text>
      ))}
    </g>
  );
}

function ChartCanvas() {
  return (
    <svg viewBox="0 0 1404 754" className="block w-full text-[13px]" role="img" aria-label="BTCUSD 일봉 차트와 RSI">
      <defs>
        <linearGradient id="backdrop" x1="0" y1="0" x2="0" y2="1">
          <stop offset="0" stopColor="#181c27" />
          <stop offset="1" stopColor="#131722" />
        </linearGradient>
        <linearGradient id="overbought" gradientUnits="userSpaceOnUse" x1="0" y1="500" x2="0" y2="562">
          <stop offset="0" stopColor="#4caf50" stopOpacity=".7" />
          <stop offset="1" stopColor="#4caf50" stopOpacity=".08" />
        </linearGradient>
        <clipPath id="above-70"><rect x="0" y="484" width={PLOT_RIGHT} height="78" /></clipPath>
        <clipPath id="price-pane"><rect x="0" y="0" width={PLOT_RIGHT} height="483" /></clipPath>
        <clipPath id="flag"><circle cx="1101.500" cy="469.500" r="8" /></clipPath>
      </defs>
      <rect width="1404" height="484" fill="url(#backdrop)" />
      <rect y="484" width="1404" height="270" fill="url(#backdrop)" />

      <g stroke="#f2f2f2" strokeOpacity=".07" shapeRendering="crispEdges">
        {[...PRICE_GRID, ...RSI_GRID].map(([y]) => <path key={y} d={`M0 ${y + 0.5}H${PLOT_RIGHT}`} />)}
        {TIME_GRID.map(([x]) => <path key={x} d={`M${x + 0.5} 0V723`} />)}
      </g>
      <rect y="562" width={PLOT_RIGHT} height="127" fill="#7e57c2" fillOpacity=".12" />
      <path d="M0 483.500H1404" stroke="#2e323c" />

      {/* price pane */}
      <rect x="1048" y="171" width="50" height="88" fill="#22ab94" fillOpacity=".07" />
      <path d="M0 191H923" stroke="#f0f0f5" strokeWidth="2" />
      {PROFILE.map(([start, split], i) => {
        const y = 170.8 + i * 3.68;
        const dim = i < 4 || i > 13;
        return (
          <g key={i}>
            <rect x={start} y={y} width={split - start} height="2.700" fill={i === 5 ? "#d8457c" : dim ? "#7e3157" : "#b13a6b"} />
            <rect x={split} y={y} width={PLOT_RIGHT - split} height="2.700" fill={i === 5 ? "#4cc3d0" : dim ? "#24707f" : "#2795a8"} />
          </g>
        );
      })}
      <path d="M923 190.500H1315" stroke="#ffffff" strokeOpacity=".35" />
      <g clipPath="url(#price-pane)">
        {CANDLES.map((c) => (
          <g key={c.x} fill={c.up ? "#179981" : "#ec3c4a"}>
            <rect x={c.x - 0.5} y={c.high} width="1" height={c.low - c.high} />
            <rect x={c.x - 1} y={c.top} width="2" height={c.body} />
          </g>
        ))}
        {WICKS.map(([x, top, bottom], i) => (
          <path key={i} d={`M${x} ${top}V${bottom}`} stroke={i % 3 === 0 ? "#179981" : "#ec3c4a"} />
        ))}
      </g>
      <path d="M0 232.500H1315" stroke="#c2406a" strokeDasharray="1 2" />

      {/* event markers */}
      <g fill="#161a25" strokeWidth="1.300">
        <circle cx="1097.500" cy="469.500" r="10.500" stroke="#a24bb8" />
        {[1110, 1108, 1106, 1104, 1101.5].map((cx) => <circle key={cx} cx={cx} cy="469.500" r="10.500" stroke="#f23645" />)}
      </g>
      <g clipPath="url(#flag)">
        <path d="M1093 461h18v18h-18z" fill="#f5f5f5" />
        <path d="M1093 463.500h18M1093 469.500h18M1093 475.500h18" stroke="#ef5350" strokeWidth="2.500" />
        <path d="M1093 461h10v9h-10z" fill="#3b8fe0" />
        <path d="M1095 463.500h8M1095 466h8M1095 468.500h8" stroke="#dcecff" strokeDasharray="1 1.500" />
      </g>

      {/* RSI pane */}
      <path d={`${RSI_PATH}V562H0Z`} fill="url(#overbought)" clipPath="url(#above-70)" />
      <g strokeDasharray="6 5">
        <path d={`M0 562.500H${PLOT_RIGHT}M0 688.500H${PLOT_RIGHT}`} stroke="#787b86" />
        <path d={`M0 625.500H${PLOT_RIGHT}`} stroke="#787b86" strokeOpacity=".5" />
      </g>
      <path d={RSI_PATH} fill="none" stroke="#9558b4" strokeWidth="1.200" />
      <path d={MA_PATH} fill="none" stroke="#d3e153" strokeWidth="1.300" />

      {/* crosshair */}
      <path d="M720.500 0V723M0 278.500H1294" stroke="#9598a1" strokeDasharray="6 5" />

      {/* axes */}
      <g fill="#a9abb3">
        {[...PRICE_GRID, ...RSI_GRID].map(([y, label]) => <text key={y} x="1324" y={y + 5}>{label}</text>)}
        {TIME_GRID.map(([x, label, strong]) => (
          <text key={x} x={x + 1} y="745" textAnchor="middle" className={strong ? "font-bold" : "text-xs"}>{label}</text>
        ))}
      </g>
      <Tag x={1316} y={182} w={83} h={17} fill="#dcdcdc" color="#131722" lines={["105,178.67"]} />
      <Tag x={1316} y={224} w={76} h={32} fill="#f23645" color="#ffffff" lines={["96,561.75", "10:55:56"]} />
      <Tag x={1316} y={267} w={76} h={22} fill="#363a45" color="#e6e6e6" lines={["87,217.37"]} />
      <Tag x={1316} y={623} w={49} h={17} fill="#e1ff3c" color="#2a2e10" lines={["48.23"]} />
      <Tag x={1316} y={642} w={49} h={17} fill="#a257c2" color="#ffffff" lines={["41.99"]} />
      <rect x="1294" y="267" width="21" height="22" rx="1" fill="#2b2f3a" />
      <g fill="none" stroke="#e6e6e6" strokeWidth="1.200">
        <circle cx="1304.500" cy="278" r="7.500" /><path d="M1300.500 278h8M1304.500 274v8" />
      </g>
      <rect x="667" y="725" width="107" height="26" rx="1" fill="#363a45" />
      <text x="721" y="744" textAnchor="middle" fill="#e6e6e6">토 2024-09-07</text>
      <g transform="translate(1352 732)" fill="none" stroke="#c0c0c0" strokeWidth="1.200">
        <path d="M4.500 1.500h7l3.500 6.500-3.500 6.500h-7L1 8z" /><circle cx="8" cy="8" r="2" />
      </g>
    </svg>
  );
}

const HiddenEye = () => (
  <Icon size={17} box={17} w={1.2} className="text-[#d1d4dc]">
    <path d="M1 8.500C4.500 2 12.500 2 16 8.500 12.500 15 4.500 15 1 8.500zM14 2L3 15" /><circle cx="8.500" cy="8.500" r="2.700" />
  </Icon>
);

const OHLC: [string, string][] = [["시", "54,203.00"], ["고", "54,997.17"], ["저", "53,961.72"], ["종", "54,300.35"]];
const INDICATORS = [
  "BB 20 SMA close 2",
  "FluidTrades - SMC Lite 10 20 2.5",
  "Divergence for Many Indicators v4 5 Close Regular Full 1 10 100 close Solid Dashed 2 1",
  "볼륨 · BTC",
];

function Legend() {
  return (
    <div className="absolute top-2 left-[9px] text-[13px] whitespace-nowrap text-[#b2b5be]">
      <div className="flex h-[18px] items-center">
        <svg width="18" height="18" viewBox="0 0 18 18" aria-hidden="true">
          <circle cx="9" cy="9" r="9" fill="#f7931a" />
          <path d="M7.500 4.500L6 13M6.700 5l3 .4c2.600.6 2.200 3.300-.3 3.300l-2.600-.2M9.300 8.800c3 .5 2.200 3.800-.7 3.700l-2.800-.3M9 3.500l-.3 1.500M8 12.800L7.700 14.300" stroke="#fff" strokeWidth="1.300" fill="none" />
        </svg>
        <h1 className="ml-[5px] text-base leading-none">비트코인 / 달러 · 1날 · BINANCE</h1>
        <span className="ml-3 flex h-[18px] w-10 items-center overflow-hidden rounded-full bg-[#2d2139]">
          <span className="flex h-full flex-1 items-center justify-center bg-[#14302f]"><i className="size-2 rounded-full bg-[#089981]" /></span>
          <span className="flex flex-1 justify-center text-[#b04bc0]">
            <Icon size={14} box={14} w={1.6}><path d="M11 3L3 7.500l8 4" /><circle cx="3" cy="7.500" r="1.300" fill="currentColor" /><circle cx="11" cy="3" r="1.300" fill="currentColor" /><circle cx="11" cy="11.500" r="1.300" fill="currentColor" /></Icon>
          </span>
        </span>
        <p className="ml-4 flex gap-[7px] text-sm leading-[18px]">
          {OHLC.map(([k, v]) => <span key={k}>{k}<span className="text-[#1d9581]">{v}</span></span>)}
          <span className="text-[#1d9581]">+95.07 (+0.18%)</span>
        </p>
      </div>
      <div className="mt-[7px] flex items-center">
        <button className="flex h-[35px] w-[88px] flex-col items-center justify-center rounded-md border border-[#d0303d] bg-[#0f0f0f] leading-none text-[#f23645]">
          <span className="text-sm leading-none font-medium">96,561.75</span><span className="mt-0.5 text-[11px]">셀</span>
        </button>
        <span className="w-10 text-center text-[11px] text-[#d1d4dc]">0.00</span>
        <button className="flex h-[35px] w-[88px] flex-col items-center justify-center rounded-md border border-[#2557e0] bg-[#0f0f0f] leading-none text-[#2962ff]">
          <span className="text-sm leading-none font-medium">96,561.75</span><span className="mt-0.5 text-[11px]">바이</span>
        </button>
      </div>
      <ul className="mt-[5px] text-[#4e5159]">
        {INDICATORS.map((name) => (
          <li key={name} className="flex h-[25px] items-center gap-[11px] pl-px">{name} <HiddenEye /></li>
        ))}
      </ul>
      <button aria-label="범례 접기" className="mt-px ml-px flex h-[21px] w-[30px] items-center justify-center rounded-sm border border-[#363a45] text-white">
        <Icon size={10} box={10} w={1.5}><path d="M1.500 6.500L5 3.500l3.500 3" /></Icon>
      </button>
    </div>
  );
}

function Chart() {
  return (
    <section aria-label="차트" className="relative overflow-hidden rounded-t bg-[#151924]">
      <ChartCanvas />
      <Legend />
      <div className="absolute top-1 right-[93px] flex gap-1 text-[#d1d4dc]">
        <button aria-label="아래로 이동" className="flex size-[25px] items-center justify-center rounded border border-[#363a45]">
          <Icon size={12} box={12} w={1.3}><path d="M6 1v10M2.500 7.500L6 11l3.500-3.500" /></Icon>
        </button>
        <button aria-label="페인 최대화" className="flex size-[25px] items-center justify-center rounded border border-[#363a45]"><Corners size={13} w={2} /></button>
      </div>
      <p className="absolute top-[492px] left-2.5 flex gap-1.5 text-sm leading-[18px] text-[#b2b5be]">
        RSI 14 close <span className="text-[#9558b4]">35.25</span><span className="text-[#d3e153]">44.24</span><span>∅</span><span>∅</span>
      </p>
      <a href="#tradingview" aria-label="TradingView" className="absolute bottom-[42px] left-3 text-[#e4e4e4]"><TvMark width={32} /></a>
    </section>
  );
}

const RANGES = ["1일", "5날", "1달", "3달", "6달", "YTD", "1해", "5해", "전체"];

export default function App() {
  return (
    <div className="flex min-h-screen flex-col overflow-hidden bg-white px-[57px] pt-[39px] pb-[76px] font-['Inter','Noto_Sans_CJK_KR',sans-serif]">
      <div className="overflow-hidden rounded-[11px] border border-[#5c5c5c] bg-[#2e2e2e] shadow-[0_0_3px_rgba(0,0,0,.6),0_20px_34px_rgba(0,0,0,.62)]">
        <TitleBar />
        <TabBar />
        <Toolbar />
        <main className="flex pt-1">
          <DrawingBar />
          <div className="mr-1 ml-[3px] min-w-0 flex-1">
            <Chart />
            <div className="flex h-10 items-center rounded-b border-t border-[#2e323c] bg-[#0f0f0f] text-[13px] whitespace-nowrap text-[#dbdbdb]">
              <div className="ml-4 flex gap-[15px]">
                {RANGES.map((r) => <button key={r}>{r}</button>)}
              </div>
              <Sep className="ml-[11px]" />
              <button aria-label="날짜로 이동" className="ml-3">
                <Icon size={22} box={22} w={1.2}><path d="M1.500 9V5.500a2 2 0 0 1 2-2h15a2 2 0 0 1 2 2V18a2 2 0 0 1-2 2H15M6 1v4.500M16 1v4.500M1.500 8h19M1 15h11M9 11.500l3.500 3.500L9 18.500" /></Icon>
              </button>
              <button className="mr-[11px] ml-auto text-sm">22:04:04 UTC+9</button>
            </div>
            <div className="mt-1 flex h-10 items-center rounded-t bg-[#0f0f0f] text-[13px] whitespace-nowrap text-[#dbdbdb]">
              <button className="ml-[17px] flex items-center gap-4">스탁 스크리너 <Chevron /></button>
              <button className="ml-6">Pine 에디터</button>
              <button className="ml-9">전략테스터</button>
              <button className="ml-9">리플레이 트레이딩 패널</button>
              <button className="ml-9">트레이딩패널</button>
              <button aria-label="패널 열기" className="ml-auto"><Icon size={20} box={20} w={1.2}><path d="M1.500 13L10 6l8.500 7" /></Icon></button>
              <button aria-label="패널 최대화" className="mr-[11px] ml-[18px]"><Corners size={18} /></button>
            </div>
          </div>
          <SideBar />
        </main>
      </div>
    </div>
  );
}
